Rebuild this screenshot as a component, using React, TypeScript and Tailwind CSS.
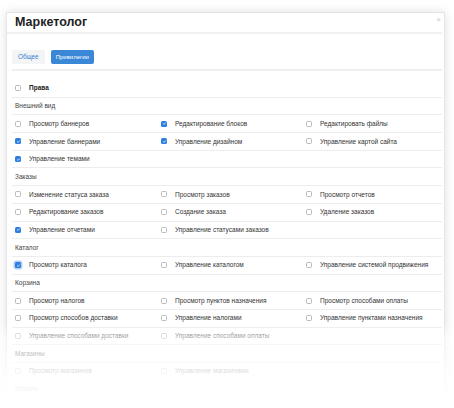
import React from "react";

type Perm = { label: string; checked?: boolean; focus?: boolean };
type Section = { title: string; rows: Perm[][] };

const sections: Section[] = [
  {
    title: "Внешний вид",
    rows: [
      [
        { label: "Просмотр баннеров" },
        { label: "Редактирование блоков", checked: true },
        { label: "Редактировать файлы" },
      ],
      [
        { label: "Управление баннерами", checked: true },
        { label: "Управление дизайном", checked: true },
        { label: "Управление картой сайта" },
      ],
      [{ label: "Управление темами", checked: true }],
    ],
  },
  {
    title: "Заказы",
    rows: [
      [
        { label: "Изменение статуса заказа" },
        { label: "Просмотр заказов" },
        { label: "Просмотр отчетов" },
      ],
      [
        { label: "Редактирование заказов" },
        { label: "Создание заказа" },
        { label: "Удаление заказов" },
      ],
      [
        { label: "Управление отчетами", checked: true },
        { label: "Управление статусами заказов" },
      ],
    ],
  },
  {
    title: "Каталог",
    rows: [
      [
        { label: "Просмотр каталога", checked: true, focus: true },
        { label: "Управление каталогом" },
        { label: "Управление системой продвижения" },
      ],
    ],
  },
  {
    title: "Корзина",
    rows: [
      [
        { label: "Просмотр налогов" },
        { label: "Просмотр пунктов назначения" },
        { label: "Просмотр способами оплаты" },
      ],
      [
        { label: "Просмотр способов доставки" },
        { label: "Управление налогами" },
        { label: "Управление пунктами назначения" },
      ],
      [
        { label: "Управление способами доставки" },
        { label: "Управление способами оплаты" },
      ],
    ],
  },
  {
    title: "Магазины",
    rows: [[{ label: "Просмотр магазинов" }, { label: "Управление магазинами" }]],
  },
  { title: "Модули", rows: [] },
];

function Checkbox({ checked, focus }: { checked?: boolean; focus?: boolean }) {
  if (checked) {
    return (
      <span
        className={
          "flex h-[6px] w-[6px] shrink-0 items-center justify-center rounded-[1.5px] bg-[#2f7fe0] " +
          (focus ? "shadow-[0_0_0_1.5px_rgba(80,150,240,0.45)]" : "")
        }
      >
        <svg viewBox="0 0 6 6" className="h-[5px] w-[5px]">
          <path d="M1.4 3.1 L2.5 4.1 L4.6 1.8" fill="none" stroke="#fff" strokeWidth="0.9" />
        </svg>
      </span>
    );
  }
  return <span className="h-[6px] w-[6px] shrink-0 rounded-[1.5px] border border-[#b9b9b9] bg-white" />;
}

function Cell({ p }: { p: Perm }) {
  return (
    <div className="flex items-center gap-[8px] pl-[3px]">
      <Checkbox checked={p.checked} focus={p.focus} />
      <span className="whitespace-nowrap">{p.label}</span>
    </div>
  );
}

export default function App() {
  return (
    <div className="relative h-[408px] w-[454px] overflow-hidden bg-white font-['Liberation_Sans',Arial,sans-serif] text-[#333]">
      <div className="ml-[6px] mt-[12px] h-[420px] w-[439px] border border-[#e4e4e4] bg-white shadow-[0_0_10px_rgba(0,0,0,0.12)]">
        <div className="mr-[2px] flex h-[21px] items-center justify-between border-b-2 border-[#f1f1f1] pl-[8px] pr-[1px]">
          <span className="text-[12.5px] font-bold leading-none text-[#222]">Маркетолог</span>
          <span className="-mt-[6px] text-[8px] leading-none text-[#c8c8c8]">×</span>
        </div>

        <div className="ml-[5px] mr-[2px] flex gap-[6px] border-b-2 border-[#efefef] pb-[5px] pt-[16px]">
          <span className="flex h-[14px] items-center rounded-[2px] bg-[#f3f4f5] px-[6px] text-[6.3px] text-[#3a7bd0]">
            Общее
          </span>
          <span className="flex h-[14px] items-center rounded-[2px] bg-[#3a87d8] px-[5px] text-[6px] text-white">
            Привилегии
          </span>
        </div>

        <div className="ml-[5px] mr-[2px] pt-[9px] text-[6.5px]">
          <div className="flex h-[17.7px] items-center border-b border-[#ececec]">
            <div className="flex items-center gap-[8px] pl-[3px]">
              <Checkbox />
              <span className="font-bold text-[#222]">Права</span>
            </div>
          </div>
          {sections.map((s) => (
            <React.Fragment key={s.title}>
              <div className="flex h-[17.7px] items-center border-b border-[#ececec] pl-[3px] text-[#444]">
                {s.title}
              </div>
              {s.rows.map((row, i) => (
                <div
                  key={i}
                  className="grid h-[17.7px] grid-cols-[146px_145px_1fr] items-center border-b border-[#ececec]"
                >
                  {row.map((p) => (
                    <Cell key={p.label} p={p} />
                  ))}
                </div>
              ))}
            </React.Fragment>
          ))}
        </div>
      </div>

      <div className="pointer-events-none absolute inset-x-0 bottom-0 h-[84px] bg-[linear-gradient(to_bottom,rgba(255,255,255,0)_0px,rgba(255,255,255,0.55)_12px,rgba(255,255,255,0.62)_28px,rgba(255,255,255,0.82)_46px,rgba(255,255,255,0.93)_64px,#fff_74px)]" />
    </div>
  );
}
